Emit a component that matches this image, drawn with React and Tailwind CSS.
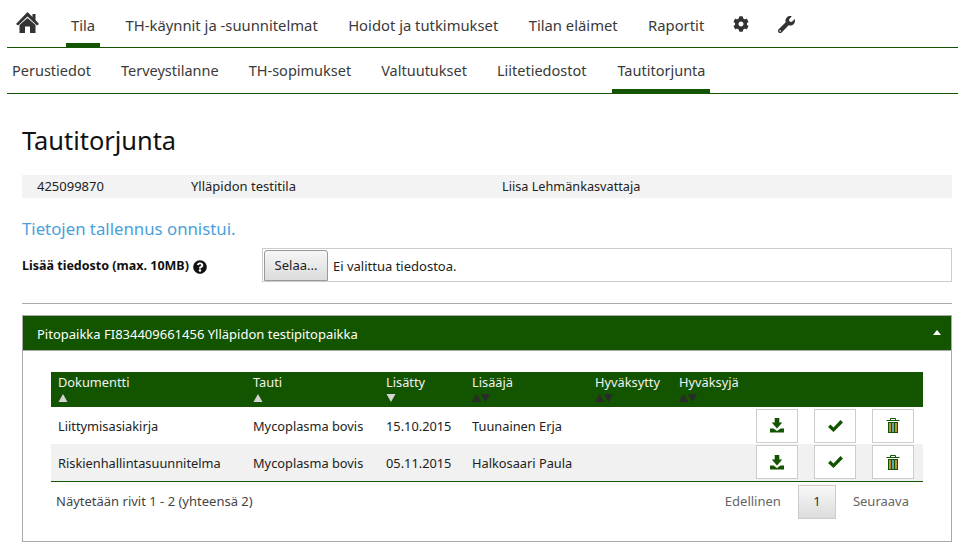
import { FaCog, FaWrench, FaQuestionCircle } from 'react-icons/fa'

const mainTabs = [
  { label: 'Tila', active: true },
  { label: 'TH-käynnit ja -suunnitelmat' },
  { label: 'Hoidot ja tutkimukset' },
  { label: 'Tilan eläimet' },
  { label: 'Raportit' },
]

const subTabs = [
  { label: 'Perustiedot' },
  { label: 'Terveystilanne' },
  { label: 'TH-sopimukset' },
  { label: 'Valtuutukset' },
  { label: 'Liitetiedostot' },
  { label: 'Tautitorjunta', active: true },
]

const columns = [
  { label: 'Dokumentti', sort: 'up', width: 'w-[195px]' },
  { label: 'Tauti', sort: 'up', width: 'w-[133px]' },
  { label: 'Lisätty', sort: 'down', width: 'w-[86px]' },
  { label: 'Lisääjä', sort: 'both', width: 'w-[123px]' },
  { label: 'Hyväksytty', sort: 'both', width: 'w-[84px]' },
  { label: 'Hyväksyjä', sort: 'both', width: 'w-[78px]' },
]

const rows = [
  { doc: 'Liittymisasiakirja', disease: 'Mycoplasma bovis', added: '15.10.2015', by: 'Tuunainen Erja' },
  { doc: 'Riskienhallintasuunnitelma', disease: 'Mycoplasma bovis', added: '05.11.2015', by: 'Halkosaari Paula' },
]

function SortMark({ sort }) {
  return (
    <svg width="20" height="9" viewBox="0 0 20 9">
      {sort === 'up' && <polygon points="0.5,8 5,0 9.5,8" fill="#d4d4d4" />}
      {sort === 'down' && <polygon points="0.5,0 9.5,0 5,8" fill="#d4d4d4" />}
      {sort === 'both' && (
        <>
          <polygon points="0,8 4.5,0 9,8" fill="#2b2b2b" />
          <polygon points="9,0 18,0 13.5,8" fill="#2b2b2b" />
        </>
      )}
    </svg>
  )
}

function HomeIcon() {
  return (
    <svg width="23" height="22" viewBox="0 0 23 22" fill="#333">
      <polygon points="11.5,0 16.5,5 16.5,2 19.5,2 19.5,8 23,12 21,13.5 11.5,4.5 2,13.5 0,12" />
      <path d="M3.500 13L11.500 6L19.500 13V21H14V14.500H9V21H3.500Z" />
    </svg>
  )
}

function DownloadIcon() {
  return (
    <svg width="14" height="15" viewBox="0 0 14 15" fill="#135400">
      <path d="M4.700 0h4.600v4.500h3L7 10.500 1.700 4.500h3z" />
      <path d="M0 10.500h3.500L7 13l3.500-2.500H14v4H0z" />
    </svg>
  )
}

function CheckIcon() {
  return (
    <svg width="15" height="12" viewBox="0 0 15 12" fill="#135400">
      <polygon points="0,7 2.500,4.500 5.500,7.500 12.500,0 15,2.500 5.500,12" />
    </svg>
  )
}

function TrashIcon() {
  return (
    <svg width="14" height="15" viewBox="0 0 14 15">
      <path d="M4.500 2V.5h5V2M0.500 2.500h13" stroke="#135400" strokeWidth="1" fill="none" />
      <rect x="2" y="4" width="10" height="11" fill="#135400" />
      <rect x="3.200" y="5" width="1.600" height="9" fill="#e0a040" />
      <rect x="6.200" y="5" width="1.600" height="9" fill="#7fb5d5" />
      <rect x="9.200" y="5" width="1.600" height="9" fill="#e0a040" />
    </svg>
  )
}

function ActionButton({ children }) {
  return (
    <button className="w-[42px] h-[34px] bg-white border border-[#ccc] flex items-center justify-center">
      {children}
    </button>
  )
}

export default function App() {
  return (
    <div className="w-[958px] h-[548px] overflow-hidden bg-white text-[14px] text-[#222] font-['Noto_Sans',sans-serif]">
      <div className="ml-[7px] h-[48px] border-b border-[#135400] flex items-stretch">
        <div className="w-[59px] pl-[9px] pt-[12px] text-[#333]">
          <HomeIcon />
        </div>
        <nav className="flex gap-[20.4px] text-[14.8px] text-[#3a3a3a]">
          {mainTabs.map((tab) => (
            <a key={tab.label} className={`px-[5px] pt-[15px] border-b-[5px] -mb-[1px] h-[48px] leading-[20px] ${tab.active ? 'border-[#135400]' : 'border-transparent'}`}>
              {tab.label}
            </a>
          ))}
        </nav>
        <div className="flex gap-[29px] pl-[24px] pt-[16px] text-[#333]">
          <FaCog size={16} />
          <FaWrench size={17} />
        </div>
      </div>

      <div className="ml-[7px] h-[46px] border-b border-[#135400] flex gap-[20px] text-[14.5px] text-[#3a3a3a]">
        {subTabs.map((tab) => (
          <a key={tab.label} className={`px-[5px] pt-[12px] border-b-[5px] -mb-[1px] h-[46px] leading-[20px] ${tab.active ? 'border-[#135400] ml-[1px]' : 'border-transparent'}`}>
            {tab.label}
          </a>
        ))}
      </div>

      <div className="px-[22px] pr-[6px]">
        <h1 className="mt-[28px] text-[25.4px] leading-[36px] text-[#111]">Tautitorjunta</h1>

        <div className="mt-[17px] h-[23px] bg-[#f3f3f3] flex items-center text-[13px] text-[#222]">
          <span className="w-[169px] pl-[15px]">425099870</span>
          <span className="w-[311px]">Ylläpidon testitila</span>
          <span className="text-[12.7px]">Liisa Lehmänkasvattaja</span>
        </div>

        <p className="mt-[19px] text-[16.8px] leading-[24px] text-[#4a9fdc]">Tietojen tallennus onnistui.</p>

        <div className="mt-[7px] flex items-center">
          <label className="w-[240px] flex items-center gap-[4px] pt-[3px] font-bold text-[12.5px] text-[#111]">
            Lisää tiedosto (max. 10MB)
            <FaQuestionCircle size={14} />
          </label>
          <div className="flex-1 h-[34px] border border-[#ccc] flex items-end pl-[1px]">
            <button className="w-[64px] h-[31px] pt-[1px] rounded-t-[3px] border border-[#999] bg-gradient-to-b from-[#f6f6f6] to-[#dcdcdc] text-[13px] text-[#222]">Selaa...</button>
            <span className="ml-[5px] pb-[5px] text-[13px] text-[#222]">Ei valittua tiedostoa.</span>
          </div>
        </div>

        <hr className="mt-[21px] border-t border-[#aaa]" />

        <section className="mt-[11px] h-[227px] border border-[#aaa]">
          <div className="h-[35px] bg-[#135400] border-b border-[#aaa] flex items-center justify-between pl-[14px] pr-[10px] pt-[3px] text-[13px] text-white">
            <span>Pitopaikka FI834409661456 Ylläpidon testipitopaikka</span>
            <svg width="8" height="5" viewBox="0 0 8 5" className="-mt-[4px]">
              <polygon points="0,5 4,0 8,5" fill="#fff" />
            </svg>
          </div>

          <div className="pl-[28px] pr-[28px] pt-[21px]">
            <table className="w-[872px] table-fixed border-b border-[#135400] text-[12.8px]">
              <thead>
                <tr className="bg-[#135400] text-[#f2f2f2] h-[35px]">
                  {columns.map((col) => (
                    <th key={col.label} className={`${col.width} font-normal text-left align-top pl-[7px] pt-[2px] leading-[16px]`}>
                      <div>{col.label}</div>
                      <div className="flex h-[10px] mt-[4px]"><SortMark sort={col.sort} /></div>
                    </th>
                  ))}
                  <th />
                </tr>
              </thead>
              <tbody>
                {rows.map((row, i) => (
                  <tr key={row.doc} className={`h-[37px] ${i % 2 ? 'bg-[#f1f1f1]' : 'bg-white'}`}>
                    <td className="pl-[7px] pt-[2px]">{row.doc}</td>
                    <td className="pl-[7px] pt-[2px]">{row.disease}</td>
                    <td className="pl-[7px] pt-[2px]">{row.added}</td>
                    <td className="pl-[7px] pt-[2px]">{row.by}</td>
                    <td />
                    <td />
                    <td>
                      <div className="flex gap-[16px] pl-[6px]">
                        <ActionButton><DownloadIcon /></ActionButton>
                        <ActionButton><CheckIcon /></ActionButton>
                        <ActionButton><TrashIcon /></ActionButton>
                      </div>
                    </td>
                  </tr>
                ))}
              </tbody>
            </table>

            <div className="flex items-center justify-between mt-[3px] text-[13px] text-[#444] pl-[5px]">
              <span>Näytetään rivit 1 - 2 (yhteensä 2)</span>
              <div className="flex items-center text-[#666] pr-[14px]">
                <span className="mr-[17px] pt-[1px]">Edellinen</span>
                <span className="w-[38px] h-[34px] flex items-center justify-center border border-[#ccc] bg-gradient-to-b from-[#f8f8f8] to-[#dcdcdc] text-[#333]">1</span>
                <span className="ml-[17px] pt-[1px]">Seuraava</span>
              </div>
            </div>
          </div>
        </section>
      </div>
    </div>
  )
}
